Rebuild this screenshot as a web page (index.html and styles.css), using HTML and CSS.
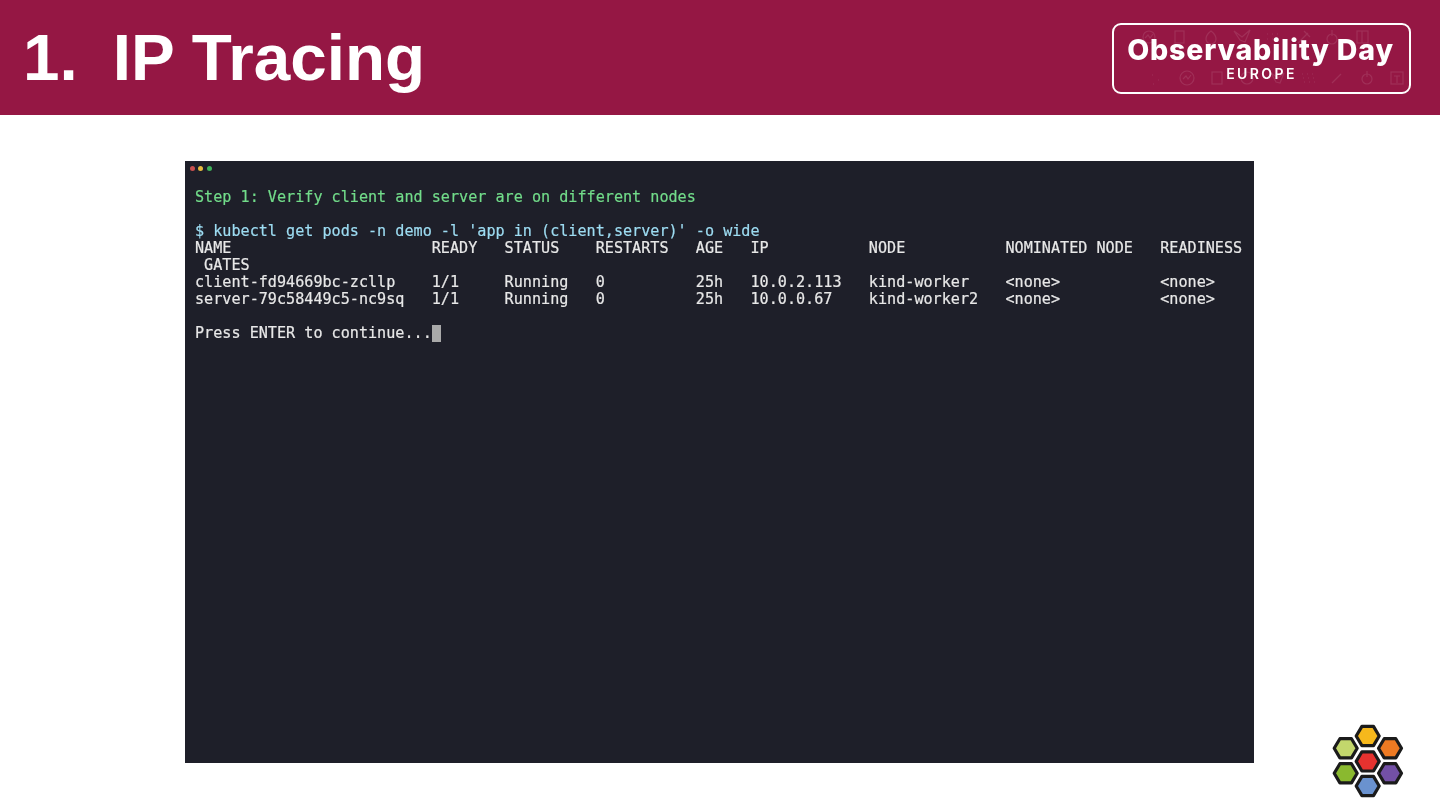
FILE: index.html
```html
<!DOCTYPE html>
<html lang="en">
<head>
<meta charset="utf-8">
<title>IP Tracing</title>
<link rel="stylesheet" href="styles.css">
</head>
<body>
<div class="slide">
  <header class="banner">
    <h1 class="title"><span class="num">1.</span><span>IP Tracing</span></h1>
    <div class="badge">
      <svg class="badge-art" width="299" height="71" viewBox="0 0 299 71" fill="none" stroke="#fff" stroke-width="1.2">
        <circle cx="37" cy="14" r="6"/><path d="M33 15l3-3 2 3 3-4"/>
        <rect x="63" y="8" width="9" height="12"/>
        <path d="M99 8c4 3 5 6 5 8a5 5 0 0 1-10 0c0-2 1-5 5-8z"/>
        <path d="M122 8l8 6 8-7-5 12-5-2z"/>
        <path d="M155 11h1m4 0h1m4 0h1m-11 5h1m4 0h1m4 0h1"/>
        <path d="M186 20l10-10"/><path d="M192 8l6 6"/>
        <circle cx="220" cy="16" r="5"/><path d="M220 7v6"/>
        <rect x="245" y="8" width="11" height="12"/><path d="M250 8v12"/>
        <path d="M40 52h1m5 5h1m-6 4h1"/>
        <circle cx="75" cy="55" r="7"/><path d="M71 56l3-3 2 3 3-4"/>
        <rect x="100" y="49" width="10" height="12"/>
        <circle cx="135" cy="55" r="6"/>
        <path d="M159 50l7 5 6-5-4 10-4-1z"/>
        <path d="M190 51h1m4 0h1m4 0h1m-10 4h1m4 0h1m4 0h1m-10 4h1m4 0h1m4 0h1"/>
        <path d="M220 60l9-9"/>
        <circle cx="255" cy="56" r="5"/><path d="M255 48v6"/>
        <rect x="279" y="49" width="12" height="12"/><path d="M282 53h6m-3 0v7"/>
      </svg>
      <span class="badge-name">Observability Day</span>
      <span class="badge-sub">EUROPE</span>
    </div>
  </header>
  <main class="stage">
    <section class="terminal">
      <div class="dots"><i class="dot red"></i><i class="dot yellow"></i><i class="dot green"></i></div>
<pre class="screen"><span class="step">Step 1: Verify client and server are on different nodes</span>

<span class="cmd">$ kubectl get pods -n demo -l 'app in (client,server)' -o wide</span>
NAME                      READY   STATUS    RESTARTS   AGE   IP           NODE           NOMINATED NODE   READINESS
 GATES
client-fd94669bc-zcllp    1/1     Running   0          25h   10.0.2.113   kind-worker    &lt;none&gt;           &lt;none&gt;
server-79c58449c5-nc9sq   1/1     Running   0          25h   10.0.0.67    kind-worker2   &lt;none&gt;           &lt;none&gt;

Press ENTER to continue...<span class="cursor"></span></pre>
    </section>
    <svg class="hexes" width="76" height="76" viewBox="0 0 76 76" stroke="#1b1b1b" stroke-width="3.2" stroke-linejoin="round">
      <polygon fill="#f6b81c" points="26.2,12 31.9,2.4 43.5,2.4 49.2,12 43.5,21.6 31.9,21.6"/>
      <polygon fill="#c3d76c" points="4.2,24.3 9.9,14.7 21.5,14.7 27.2,24.3 21.5,33.9 9.9,33.9"/>
      <polygon fill="#ee7a22" points="48.5,24.3 54.2,14.7 65.8,14.7 71.5,24.3 65.8,33.9 54.2,33.9"/>
      <polygon fill="#e6322f" points="26.2,37.4 31.9,27.8 43.5,27.8 49.2,37.4 43.5,47 31.9,47"/>
      <polygon fill="#8ab92f" points="4.2,49.3 9.9,39.7 21.5,39.7 27.2,49.3 21.5,58.9 9.9,58.9"/>
      <polygon fill="#7350a6" points="48.5,49.3 54.2,39.7 65.8,39.7 71.5,49.3 65.8,58.9 54.2,58.9"/>
      <polygon fill="#6a92cf" points="26.2,62 31.9,52.4 43.5,52.4 49.2,62 43.5,71.6 31.9,71.6"/>
    </svg>
  </main>
</div>
</body>
</html>
```

FILE: styles.css
```css
* { box-sizing: border-box; }
html, body { margin: 0; padding: 0; background: #fff; }
.slide { width: 1440px; height: 810px; overflow: hidden; position: relative; display: flex; flex-direction: column; }
.banner {
  height: 115px; flex: none; background: #951744; color: #fff;
  display: flex; align-items: center; justify-content: space-between;
  padding: 0 29px 0 23px;
}
.title {
  margin: 0; display: flex; gap: 35px;
  font: 700 65.6px/1 "Liberation Sans", Arial, sans-serif;
}
.badge {
  position: relative; width: 299px; height: 71px; margin-top: 1px;
  border: 2px solid #fff; border-radius: 9px;
  display: flex; flex-direction: column; align-items: center;
  padding-top: 7px;
}
.badge-art { position: absolute; left: -2px; top: -2px; opacity: .1; filter: blur(.5px); }
.badge-name { position: relative; font: 800 28.5px/36px Inter, "Open Sans", sans-serif; white-space: nowrap; letter-spacing: .85px; margin-left: -2px; filter: blur(.3px); }
.badge-sub { position: relative; font: 600 14px/14px Inter, "Open Sans", sans-serif; letter-spacing: 2.4px; margin-top: -1px; margin-left: 0; filter: blur(.3px); }
.stage { flex: 1; position: relative; padding: 46px 0 0 185px; }
.terminal { width: 1069px; height: 602px; background: #1e1f29; }
.dots { display: flex; gap: 3.5px; height: 28px; padding: 5px 0 0 4.5px; }
.dot { width: 5px; height: 5px; border-radius: 50%; }
.red { background: #c9504f; }
.yellow { background: #e8bb3e; }
.green { background: #3fb35a; }
.screen {
  margin: 0; padding-left: 10px; color: #e8e8e8;
  font: 15.13px/17px "DejaVu Sans Mono", "Liberation Mono", monospace;
  -webkit-text-stroke: .2px currentColor;
  filter: blur(.4px);
}
.step { color: #72dc8a; }
.cmd { color: #9ddcf2; }
.cursor { display: inline-block; width: 9px; height: 17px; background: #a9a9a9; vertical-align: top; }
.hexes { position: absolute; left: 1330px; top: 609px; }
```
